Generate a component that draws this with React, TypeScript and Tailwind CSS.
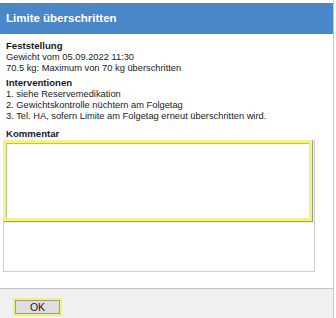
export default function App() {
  return (
    <div
      className="relative flex h-[318px] w-[336px] flex-col overflow-hidden bg-white text-[9.3px] leading-[11px] text-[#1a1a1a]"
      style={{ fontFamily: '"Liberation Sans", Arial, sans-serif' }}
    >
      {/* right window edge */}
      <div className="absolute right-[2px] top-0 h-full w-px bg-[#c8c8c8]" />

      <div className="mr-[3px] mt-[3px] flex h-[31px] items-center bg-[#4a87c9] px-[6px]">
        <span className="text-[11.5px] font-bold text-white">Limite überschritten</span>
      </div>

      <div className="flex flex-1 flex-col pl-[6px] pt-[6px]">
        <div className="text-[9.6px] font-bold">Feststellung</div>
        <div className="mt-[1px]">Gewicht vom 05.09.2022 11:30</div>
        <div>70.5 kg: Maximum von 70 kg überschritten</div>
        <div className="mt-[3px] text-[9.6px] font-bold">Interventionen</div>
        <div className="mt-[1px]">1. siehe Reservemedikation</div>
        <div>2. Gewichtskontrolle nüchtern am Folgetag</div>
        <div>3. Tel. HA, sofern Limite am Folgetag erneut überschritten wird.</div>
        <div className="mt-[6px] text-[9.6px] font-bold">Kommentar</div>

        <div className="relative -ml-[3px] mt-px h-[132px] w-[312px] border border-[#cfcfcf] bg-white">
          {/* yellow highlight over the field */}
          <div className="absolute -left-px -top-px h-[81px] w-[309px] border-[3px] border-[#f4f47c] shadow-[1px_1px_1px_#9a9a9a,inset_1px_1px_1px_#b0b0b0]" />
        </div>
      </div>

      <div className="mr-[3px] flex h-[30px] items-start border-t border-[#c4c4c4] bg-[#f0f0f0] pl-[13px] pt-[9px]">
        <div className="flex h-[18px] w-[49px] items-center justify-center border-2 border-[#f0f07a] bg-[#dedede] text-[10.5px] shadow-[inset_0_0_0_1px_#9c9c9c]">
          OK
        </div>
      </div>
    </div>
  );
}
